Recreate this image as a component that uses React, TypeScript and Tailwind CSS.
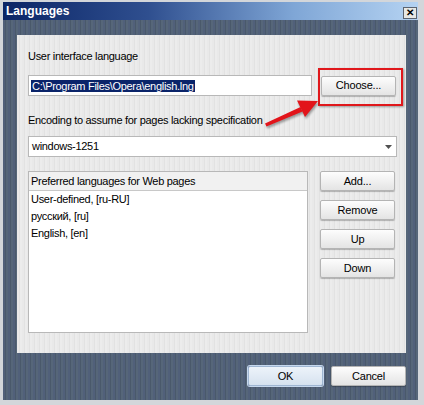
const FONT = "font-['Liberation_Sans','Arial',sans-serif]";

const LANGUAGES = ['User-defined, [ru-RU]', 'русский, [ru]', 'English, [en]'];

function SkinButton({ label, primary = false }: { label: string; primary?: boolean }) {
  return (
    <button
      type="button"
      className={`flex h-[20px] w-[75px] items-center justify-center rounded-[2px] border text-[11px] tracking-[-0.2px] text-black shadow-[0_1px_1px_rgba(0,0,0,0.25)] ${
        primary
          ? 'border-[#9fb6d2] bg-[linear-gradient(#edf3fa,#d6e2ef)] ring-1 ring-[#c6d8ee]'
          : 'border-[#b4b4b4] bg-[linear-gradient(#fdfdfd,#e4e4e4)]'
      }`}
    >
      {label}
    </button>
  );
}

export default function App() {
  return (
    <div className={`relative h-[405px] w-[424px] overflow-hidden bg-[#d3d6da] ${FONT}`}>
      {/* title bar */}
      <div className="ml-[3px] mr-[6px] mt-[2px] flex h-[18px] items-center justify-between bg-[linear-gradient(90deg,#0b2566,#2f4f8f_35%,#7fa6d6_70%,#b5d3f2)] pl-[3px] pr-[1px]">
        <span className="text-[12px] font-bold leading-none text-white">Languages</span>
        <div className="mt-[3px] flex h-[12px] w-[14px] items-center justify-center border border-[#5c6470] bg-[#e8e8e4] text-[10px] font-bold leading-none text-black">
          ✕
        </div>
      </div>

      {/* window body */}
      <div className="ml-[3px] mr-[6px] flex h-[380px] flex-col bg-[repeating-linear-gradient(90deg,#51607a_0px,#51607a_2px,#4a596b_2px,#4a596b_3px,#566679_3px,#566679_5px)] pb-[14px] pl-[14px] pr-[12px] pt-[15px]">
        <div className="flex h-[318px] flex-col bg-[repeating-linear-gradient(90deg,#e9e9e9_0px,#e9e9e9_2px,#e2e2e2_2px,#e2e2e2_3px,#ececec_3px,#ececec_5px)] px-[11px] pb-[20px] pr-[9px] pt-[14px] text-[11px] tracking-[-0.3px] text-black">
          <div className="h-[14px] leading-[14px]">User interface language</div>
          <div className="mt-[12px] flex items-center gap-[9px] pr-[1px]">
            <div className="flex h-[21px] flex-1 items-center border border-[#b8b8b8] bg-white px-[2px]">
              <span className="bg-[#0a246a] px-px leading-[12px] text-white">
                C:\Program Files\Opera\english.lng
              </span>
            </div>
            <SkinButton label="Choose..." />
          </div>

          <div className="mt-[17px] h-[14px] leading-[14px]">
            Encoding to assume for pages lacking specification
          </div>
          <div className="mt-[9px] flex h-[21px] items-center justify-between border border-[#b8b8b8] bg-white pl-[3px] pr-[4px]">
            <span>windows-1251</span>
            <svg width="7" height="4" viewBox="0 0 7 4">
              <polygon points="0,0 7,0 3.5,4" fill="#505050" />
            </svg>
          </div>

          <div className="mt-[14px] flex flex-1 gap-[12px]">
            <div className="flex w-[280px] flex-col border border-[#b8b8b8] bg-white">
              <div className="flex h-[19px] items-center border-b border-[#c8c8c8] bg-[#f1f1f1] pl-[2px]">
                Preferred languages for Web pages
              </div>
              {LANGUAGES.map((lang) => (
                <div key={lang} className="flex h-[17px] items-center pl-[2px] first:mt-[1px]">
                  {lang}
                </div>
              ))}
            </div>
            <div className="flex flex-col gap-[9px]">
              <SkinButton label="Add..." />
              <SkinButton label="Remove" />
              <SkinButton label="Up" />
              <SkinButton label="Down" />
            </div>
          </div>
        </div>

        <div className="mt-[13px] flex justify-end gap-[8px]">
          <SkinButton label="OK" primary />
          <SkinButton label="Cancel" />
        </div>
      </div>

      {/* red callout over the Choose button */}
      <div className="absolute left-[318px] top-[68px] h-[38px] w-[85px] border-2 border-[#e0181c] shadow-[1px_1px_2px_rgba(0,0,0,0.35)]" />
      <svg
        className="pointer-events-none absolute left-0 top-0"
        width="424"
        height="405"
        viewBox="0 0 424 405"
      >
        <g fill="#e2141a" style={{ filter: 'drop-shadow(1px 2px 1px rgba(0,0,0,0.35))' }}>
          <polygon points="265,123.5 300.5,107 302.5,111.5 266.5,126.5" />
          <polygon points="318,101 297,100.5 305,117" />
        </g>
      </svg>
    </div>
  );
}
